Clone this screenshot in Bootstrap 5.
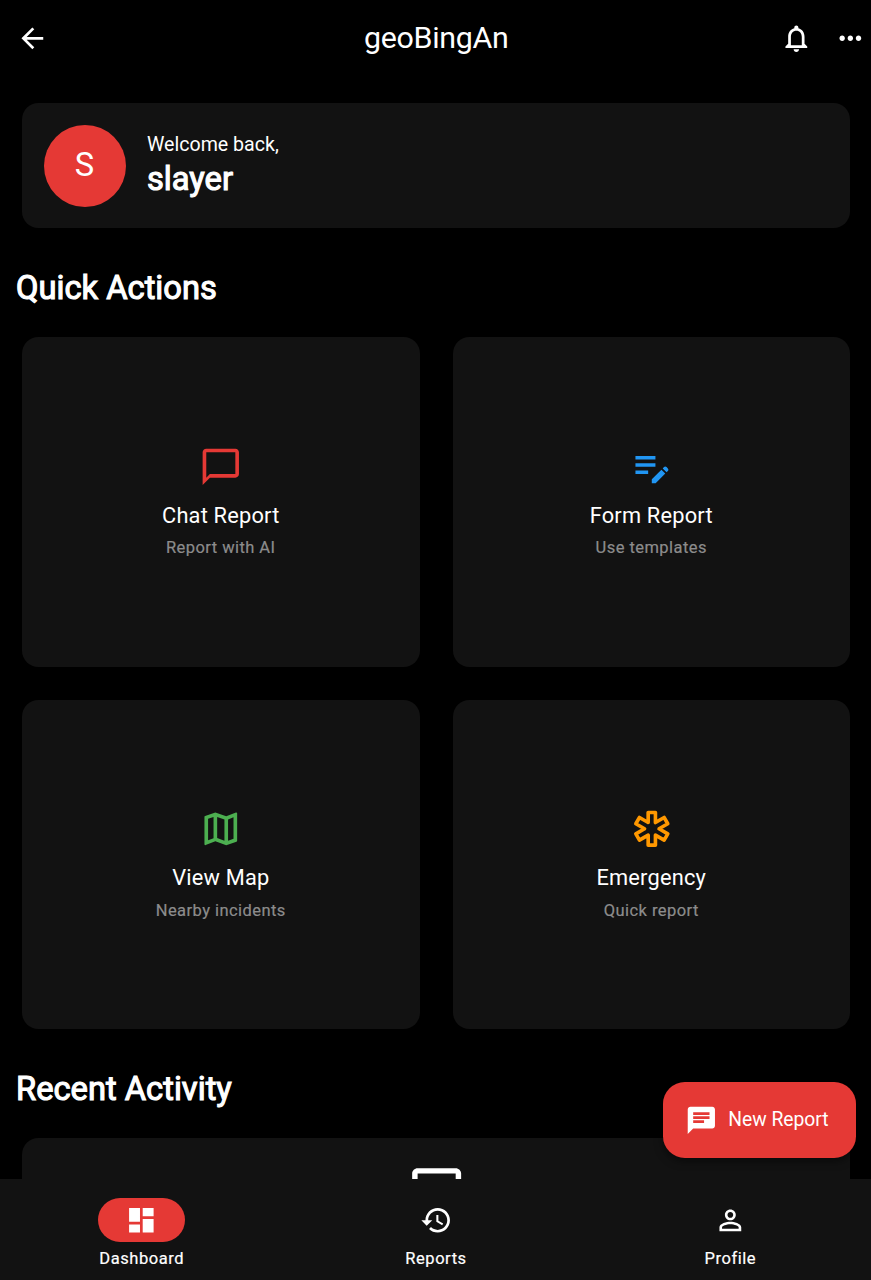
<!DOCTYPE html>
<html lang="en">
<head>
<meta charset="utf-8">
<meta name="viewport" content="width=device-width, initial-scale=1">
<title>geoBingAn</title>
<link href="https://cdn.jsdelivr.net/npm/bootstrap@5.3.0/dist/css/bootstrap.min.css" rel="stylesheet">
<style>
body{background:#000;color:#fff;font-family:Roboto,sans-serif;height:1280px;overflow:hidden}
svg{fill:currentColor;display:block;flex:none}
.ic{width:32.7px;height:32.7px}
.ic-lg{width:43.6px;height:43.6px;position:relative;left:.4px;top:.5px}
.topbar{height:76px;padding:0 4.5px 0 16px}
.app-title{font-size:30.4px;line-height:36px;letter-spacing:-.33px;padding-bottom:1px}
.side{width:110px}
.side-end{width:120px;gap:21.5px}
.content{padding:27px 21px 0 22px}
.panel{background:#121212;border-radius:16.5px}
.welcome{height:125px;padding:0 21.5px;gap:21.5px}
.avatar{width:82px;height:82px;background:#e53935;font-size:32.7px;padding-top:1px}
.hello{font-size:19.6px;line-height:27px;padding-top:1px}
.strong-title{font-size:32.7px;line-height:44px;-webkit-text-stroke:1.1px #fff;margin:0;font-weight:400}
.section-title{margin:38px 0 27px -6px}
.actions{display:grid;grid-template-columns:1fr 1fr;gap:33px}
.action{height:329.5px}
.action-name{font-size:21.8px;line-height:33px;letter-spacing:.2px;margin-top:11px}
.action-note{font-size:16.5px;line-height:22px;letter-spacing:.44px;color:#8c8c8c;-webkit-text-stroke:.2px #8c8c8c;margin-top:5.6px}
.bottom{height:101px;background:#121212}
.tab{width:294.3px;padding-top:19px;padding-left:1px}
.pill{width:87px;height:44px}
.pill.on{background:#e53935}
.tab-label{font-size:16.5px;line-height:22px;letter-spacing:.55px;margin-top:5.6px;-webkit-text-stroke:.2px #fff}
.fab{right:15px;top:1081.5px;width:193px;height:76px;border-radius:21.8px;background:#e53935;box-shadow:0 3px 8px rgba(0,0,0,.5);gap:10.5px;padding:1px 0 0 22px;font-size:19.3px}
.title-sm-gap{margin-top:-.5px}
</style>
</head>
<body class="d-flex flex-column position-relative">
<header class="topbar d-flex align-items-center justify-content-between flex-shrink-0">
  <div class="side"><svg class="ic" viewBox="0 0 24 24"><path d="M20 11H7.83l5.59-5.59L12 4l-8 8 8 8 1.41-1.41L7.83 13H20v-2z"/></svg></div>
  <div class="app-title">geoBingAn</div>
  <div class="side-end d-flex justify-content-end">
    <svg class="ic" viewBox="0 0 24 24"><path d="M12 22c1.1 0 2-.9 2-2h-4c0 1.1.9 2 2 2zm6-6v-5c0-3.07-1.63-5.64-4.5-6.32V4c0-.83-.67-1.5-1.5-1.5s-1.5.67-1.5 1.5v.68C7.64 5.36 6 7.92 6 11v5l-2 2v1h16v-1l-2-2zm-2 1H8v-6c0-2.48 1.51-4.5 4-4.5s4 2.02 4 4.5v6z"/></svg>
    <svg class="ic" viewBox="0 0 24 24"><path d="M6 10c-1.1 0-2 .9-2 2s.9 2 2 2 2-.9 2-2-.9-2-2-2zm12 0c-1.1 0-2 .9-2 2s.9 2 2 2 2-.9 2-2-.9-2-2-2zm-6 0c-1.1 0-2 .9-2 2s.9 2 2 2 2-.9 2-2-.9-2-2-2z"/></svg>
  </div>
</header>

<main class="content flex-grow-1 overflow-hidden">
  <section class="panel welcome d-flex align-items-center">
    <div class="avatar rounded-circle d-flex align-items-center justify-content-center">S</div>
    <div>
      <div class="hello">Welcome back,</div>
      <div class="strong-title title-sm-gap">slayer</div>
    </div>
  </section>

  <h2 class="strong-title section-title">Quick Actions</h2>
  <div class="actions">
    <div class="panel action d-flex flex-column align-items-center justify-content-center">
      <svg class="ic-lg" style="color:#e53935" viewBox="0 0 24 24"><path d="M20 2H4c-1.1 0-2 .9-2 2v18l4-4h14c1.1 0 2-.9 2-2V4c0-1.1-.9-2-2-2zm0 14H6l-2 2V4h16v12z"/></svg>
      <div class="action-name">Chat Report</div>
      <div class="action-note">Report with AI</div>
    </div>
    <div class="panel action d-flex flex-column align-items-center justify-content-center">
      <svg class="ic-lg" style="color:#2196f3" viewBox="0 0 24 24"><path d="M3 10h11v2H3v-2zm0-2h11V6H3v2zm0 8h7v-2H3v2zm15.01-3.13.71-.71c.39-.39 1.02-.39 1.41 0l.71.71c.39.39.39 1.02 0 1.41l-.71.71-2.12-2.12zm-.71.71-5.3 5.3V21h2.12l5.3-5.3-2.12-2.12z"/></svg>
      <div class="action-name">Form Report</div>
      <div class="action-note">Use templates</div>
    </div>
    <div class="panel action d-flex flex-column align-items-center justify-content-center">
      <svg class="ic-lg" style="color:#4caf50" viewBox="0 0 24 24"><path d="M20.5 3l-.16.03L15 5.1 9 3 3.36 4.9c-.21.07-.36.25-.36.48V20.5c0 .28.22.5.5.5l.16-.03L9 18.9l6 2.1 5.64-1.9c.21-.07.36-.25.36-.48V3.5c0-.28-.22-.5-.5-.5zM10 5.47l4 1.4v11.66l-4-1.4V5.47zm-5 .99l3-1.01v11.7l-3 1.16V6.46zm14 11.08l-3 1.01V6.86l3-1.16v11.84z"/></svg>
      <div class="action-name">View Map</div>
      <div class="action-note">Nearby incidents</div>
    </div>
    <div class="panel action d-flex flex-column align-items-center justify-content-center">
      <svg class="ic-lg" style="color:#ff9800" viewBox="0 0 24 24"><path fill="none" stroke="currentColor" stroke-width="2" stroke-linejoin="round" d="M20.79 9.23l-2-3.46L14 8.54V3h-4v5.54L5.21 5.77l-2 3.46L8 12l-4.79 2.77 2 3.46L10 15.46V21h4v-5.54l4.79 2.77 2-3.46L16 12z"/></svg>
      <div class="action-name">Emergency</div>
      <div class="action-note">Quick report</div>
    </div>
  </div>

  <h2 class="strong-title section-title">Recent Activity</h2>
  <section class="panel d-flex justify-content-center" style="padding:21.5px 21px 22px 22px">
    <svg width="65.3" height="65.3" viewBox="0 0 24 24"><path d="M19 3H5c-1.1 0-2 .9-2 2v14c0 1.1.9 2 2 2h14c1.1 0 2-.9 2-2V5c0-1.1-.9-2-2-2zm0 16H5v-3h3.56c.69 1.19 1.97 2 3.45 2s2.75-.81 3.45-2H19v3zm0-5h-4.99c0 1.1-.9 2-2 2s-2-.9-2-2H5V5h14v9z"/></svg>
  </section>
</main>

<nav class="bottom d-flex justify-content-center flex-shrink-0">
  <div class="tab d-flex flex-column align-items-center flex-shrink-0">
    <div class="pill on rounded-pill d-flex align-items-center justify-content-center"><svg class="ic" viewBox="0 0 24 24"><path d="M3 13h8V3H3v10zm0 8h8v-6H3v6zm10 0h8V11h-8v10zm0-18v6h8V3h-8z"/></svg></div>
    <div class="tab-label">Dashboard</div>
  </div>
  <div class="tab d-flex flex-column align-items-center flex-shrink-0">
    <div class="pill d-flex align-items-center justify-content-center"><svg class="ic" viewBox="0 0 24 24"><path d="M13 3c-4.97 0-9 4.03-9 9H1l3.89 3.89.07.14L9 12H6c0-3.87 3.13-7 7-7s7 3.13 7 7-3.13 7-7 7c-1.93 0-3.68-.79-4.94-2.06l-1.42 1.42C8.27 19.99 10.51 21 13 21c4.97 0 9-4.03 9-9s-4.03-9-9-9zm-1 5v5l4.28 2.54.72-1.21-3.5-2.08V8H12z"/></svg></div>
    <div class="tab-label">Reports</div>
  </div>
  <div class="tab d-flex flex-column align-items-center flex-shrink-0">
    <div class="pill d-flex align-items-center justify-content-center"><svg class="ic" viewBox="0 0 24 24"><path d="M12 5.9c1.16 0 2.1.94 2.1 2.1s-.94 2.1-2.1 2.1S9.9 9.16 9.9 8s.94-2.1 2.1-2.1m0 9c2.97 0 6.1 1.46 6.1 2.1v1.1H5.9V17c0-.64 3.13-2.1 6.1-2.1M12 4C9.79 4 8 5.79 8 8s1.79 4 4 4 4-1.79 4-4-1.79-4-4-4zm0 9c-2.67 0-8 1.34-8 4v3h16v-3c0-2.66-5.33-4-8-4z"/></svg></div>
    <div class="tab-label">Profile</div>
  </div>
</nav>

<button type="button" class="fab position-absolute border-0 text-white d-flex align-items-center">
  <svg class="ic" viewBox="0 0 24 24"><path d="M20 2H4c-1.1 0-1.99.9-1.99 2L2 22l4-4h14c1.1 0 2-.9 2-2V4c0-1.1-.9-2-2-2zM6 9h12v2H6V9zm8 5H6v-2h8v2zm4-6H6V6h12v2z"/></svg>
  <span>New Report</span>
</button>
<script src="https://cdn.jsdelivr.net/npm/bootstrap@5.3.0/dist/js/bootstrap.bundle.min.js"></script>
</body>
</html>
